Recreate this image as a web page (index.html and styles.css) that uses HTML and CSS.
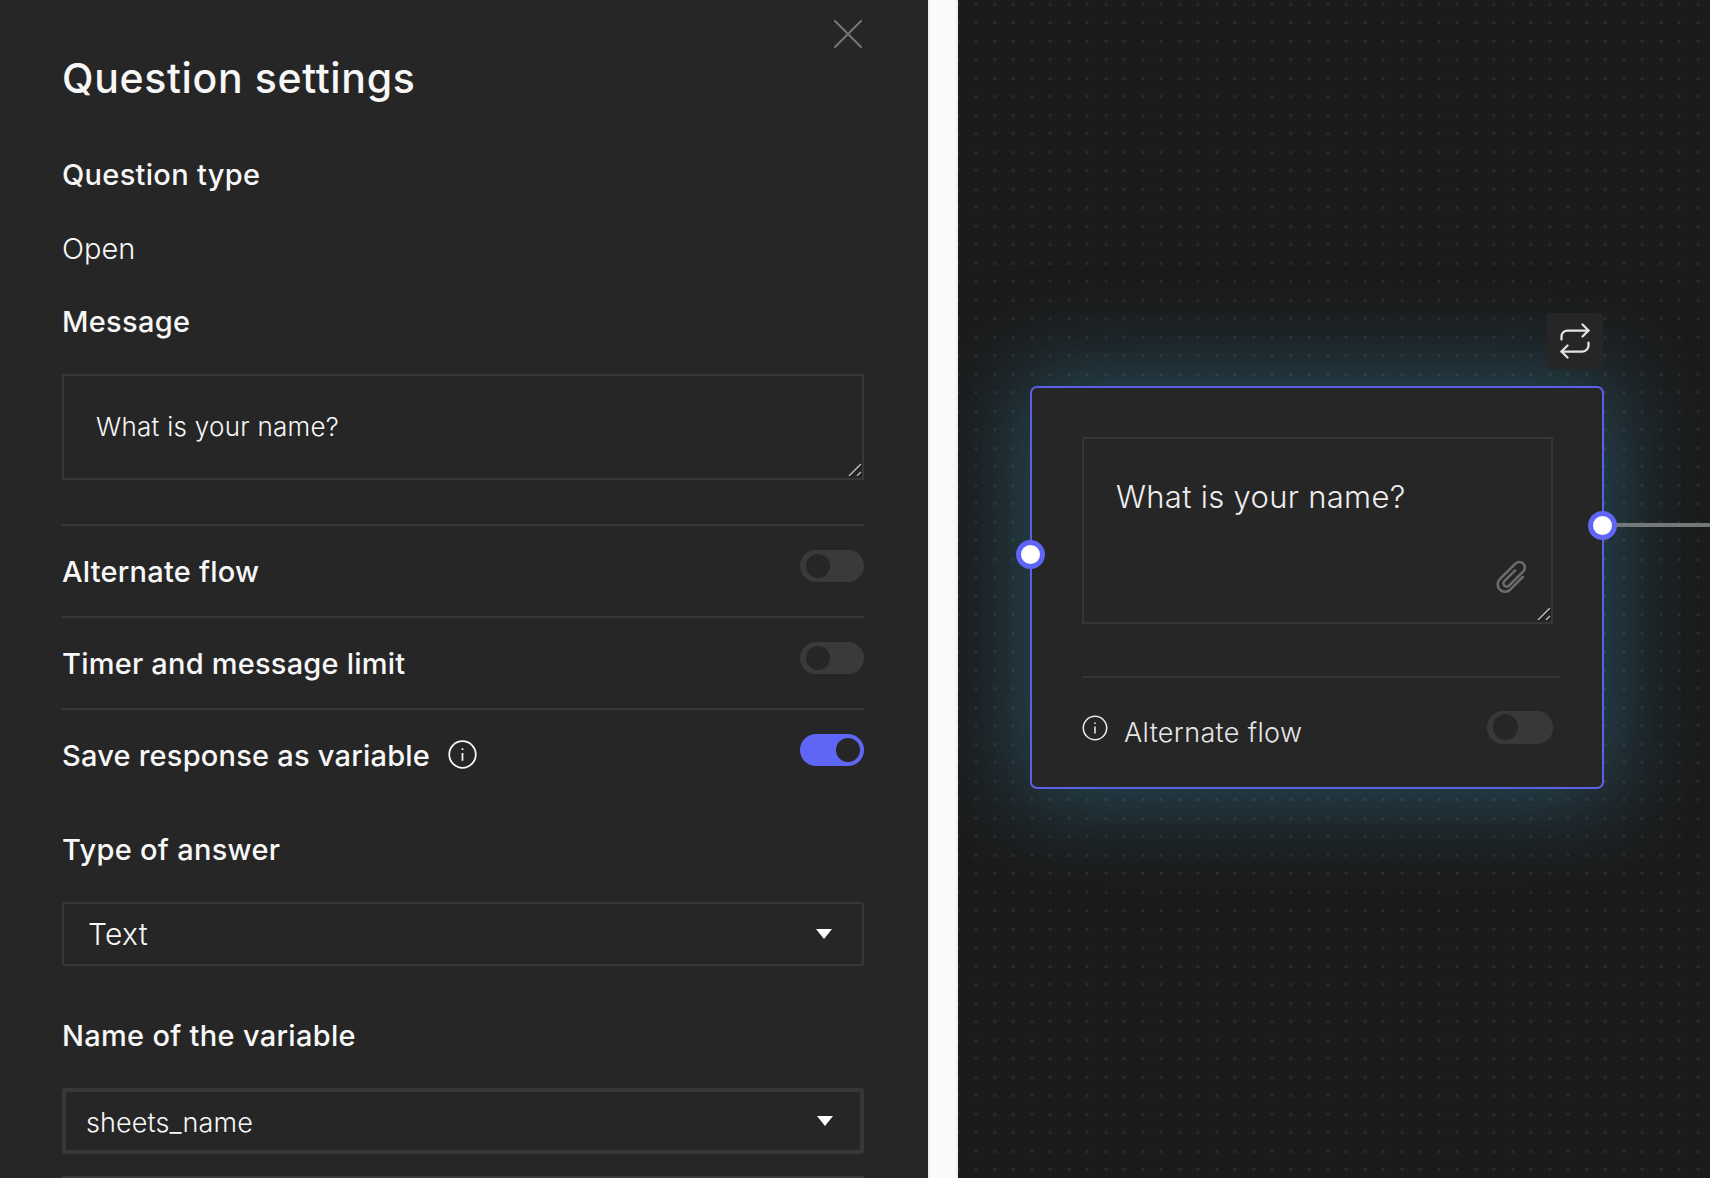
FILE: index.html
```html
<!DOCTYPE html>
<html lang="en">
<head>
<meta charset="utf-8">
<title>Question settings</title>
<link rel="stylesheet" href="styles.css">
</head>
<body>
<div class="app">
  <aside class="settings">
    <button class="close" aria-label="Close">
      <svg viewBox="0 0 28 28" class="close-icon"><path d="M1 1 27 27M27 1 1 27"/></svg>
    </button>
    <h1 class="title">Question settings</h1>
    <h2 class="label label-type">Question type</h2>
    <p class="value">Open</p>
    <h2 class="label label-message">Message</h2>
    <div class="textbox">What is your name?
      <svg viewBox="0 0 14 14" class="grip"><path class="grip-back" d="M1 14 14 1M9 14l5-5"/><path class="grip-line" d="M1 13 13 1M9 13l4-4"/></svg>
    </div>

    <div class="row row-first">
      <span class="row-label">Alternate flow</span>
      <span class="toggle"><span class="knob"></span></span>
    </div>
    <div class="row">
      <span class="row-label">Timer and message limit</span>
      <span class="toggle"><span class="knob"></span></span>
    </div>
    <div class="row row-last">
      <span class="row-label row-label-icon">Save response as variable
        <svg viewBox="0 0 28 28" class="info-icon"><circle cx="14" cy="14" r="12.8"/><path d="M14 12.5V20M14 8v1.6"/></svg>
      </span>
      <span class="toggle toggle-on"><span class="knob"></span></span>
    </div>

    <h2 class="label label-answer">Type of answer</h2>
    <div class="select select-text">
      <span>Text</span>
      <svg viewBox="0 0 16 10" class="caret"><path d="M0 0H16L8 10Z"/></svg>
    </div>
    <h2 class="label label-variable">Name of the variable</h2>
    <div class="select select-variable">
      <span>sheets_name</span>
      <svg viewBox="0 0 16 10" class="caret"><path d="M0 0H16L8 10Z"/></svg>
    </div>
    <div class="end-rule"></div>
  </aside>

  <div class="gutter"></div>

  <main class="canvas">
    <div class="glow"></div>
    <div class="dots"></div>
    <button class="repeat" aria-label="Repeat">
      <svg viewBox="0 0 24 24" class="repeat-icon"><path d="M17 1l4 4-4 4"/><path d="M3 11V9a4 4 0 0 1 4-4h14"/><path d="M7 23l-4-4 4-4"/><path d="M21 13v2a4 4 0 0 1-4 4H3"/></svg>
    </button>
    <div class="wire"></div>
    <section class="card">
      <div class="card-text">What is your name?
        <svg viewBox="0 0 30 30" class="clip-icon"><g transform="rotate(45 15 15)"><path d="M13 9.5V21.5a2.6 2.6 0 0 0 5.2 0V5.6a4.4 4.4 0 0 0-8.8 0V23a5.8 5.8 0 0 0 11.6 0V9"/></g></svg>
        <svg viewBox="0 0 14 14" class="grip"><path class="grip-back" d="M1 14 14 1M9 14l5-5"/><path class="grip-line" d="M1 13 13 1M9 13l4-4"/></svg>
      </div>
      <div class="card-rule"></div>
      <div class="card-foot">
        <svg viewBox="0 0 28 28" class="card-info"><circle cx="14" cy="14" r="12.6"/><path d="M14 12.5V20M14 8v1.6"/></svg>
        <span class="card-label">Alternate flow</span>
        <span class="toggle toggle-card"><span class="knob"></span></span>
      </div>
    </section>
    <span class="port port-in"></span>
    <span class="port port-out"></span>
  </main>
</div>
</body>
</html>
```
FILE: styles.css
```css
* { box-sizing: border-box; }
html, body { margin: 0; height: 100%; background: #fafafa; }
body { font-family: Inter, "Liberation Sans", sans-serif; color: #f7f7f7; overflow: hidden; }
.app { display: flex; width: 1710px; height: 1178px; overflow: hidden; }

.settings { position: relative; flex: 0 0 928px; height: 1178px; padding: 54px 64px 0 62px; background: #262626; }
.close { position: absolute; left: 833px; top: 19px; width: 30px; height: 30px; padding: 1px; border: 0; background: none; }
.close-icon { display: block; width: 28px; height: 28px; fill: none; stroke: #767676; stroke-width: 2; stroke-linecap: round; }

.title { margin: 0; font-size: 41px; line-height: 48px; font-weight: 500; letter-spacing: .65px; }
.label { margin: 0; font-size: 29px; line-height: 36px; font-weight: 500; letter-spacing: .3px; }
.label-type { margin-top: 55px; }
.label-message { margin-top: 37px; }
.label-answer { margin-top: 58px; }
.label-variable { margin-top: 52px; }
.value { margin: 38px 0 0; font-size: 29px; line-height: 36px; font-weight: 300; }

.textbox { position: relative; margin-top: 34px; height: 106px; padding: 35px 32px 0; border: 2px solid #383838; font-size: 26px; line-height: 32px; font-weight: 300; letter-spacing: .27px; }
.grip { position: absolute; right: 0; bottom: 1px; width: 14px; height: 14px; fill: none; }
.grip-back { stroke: #111111; stroke-width: 2; }
.grip-line { stroke: #b5b5b5; stroke-width: 1.6; }

.row { display: flex; justify-content: space-between; align-items: flex-start; height: 92px; padding-top: 24px; border-top: 2px solid #383838; }
.row-first { margin-top: 44px; }
.row-last { height: 66px; }
.row-label { margin-top: 4px; font-size: 29px; line-height: 36px; font-weight: 500; letter-spacing: .22px; }
.row-label-icon { display: flex; align-items: center; gap: 18px; }
.info-icon { width: 29px; height: 29px; margin-top: -4px; fill: none; stroke: #f7f7f7; stroke-width: 1.7; }

.toggle { display: block; flex: none; width: 64px; height: 32px; padding: 4px 0 0 6px; border-radius: 16px; background: #3a3a3a; }
.knob { display: block; width: 24px; height: 24px; border-radius: 50%; background: #262626; }
.toggle-on { padding-left: 36px; background: #5f66f6; }

.select { display: flex; align-items: center; justify-content: space-between; margin-top: 34px; border: 2px solid #383838; border-radius: 3px; font-weight: 300; }
.select-text { height: 64px; padding: 0 30px 0 24px; font-size: 30px; letter-spacing: .3px; }
.select-variable { height: 66px; padding: 0 27px 0 20px; border-width: 4px; font-size: 27px; letter-spacing: .1px; }
.select-variable span { padding-top: 3px; }
.caret { width: 16px; height: 10px; fill: #fff; }
.end-rule { height: 2px; margin-top: 22px; background: #383838; }

.gutter { flex: 0 0 30px; height: 1178px; background: #fafafa; border-left: 2px solid #eeeeee; border-right: 2px solid #eeeeee; }

.canvas { position: relative; flex: 1; height: 1178px; overflow: hidden; background: #1b1b1b; }
.glow { position: absolute; left: 72px; top: 386px; width: 574px; height: 403px; border-radius: 8px; box-shadow: 0 0 90px 14px rgba(45, 102, 126, .62); }
.dots { position: absolute; inset: 0; background-image: repeating-linear-gradient(90deg, rgba(255, 255, 255, .065) 0 3px, transparent 3px 18.5px); background-position: -1.5px 0; background-size: 740px 100%; -webkit-mask-image: repeating-linear-gradient(180deg, #000 0 3px, transparent 3px 18.5px); mask-image: repeating-linear-gradient(180deg, #000 0 3px, transparent 3px 18.5px); mask-size: 100% 1184px; mask-position: 0 3px; -webkit-mask-size: 100% 1184px; -webkit-mask-position: 0 3px; }

.repeat { position: absolute; left: 589px; top: 313px; display: flex; align-items: center; justify-content: center; width: 56px; height: 56px; padding: 0; border: 0; border-radius: 4px; background: #262626; }
.repeat-icon { width: 36px; height: 36px; fill: none; stroke: #e4e4e4; stroke-width: 1.5; stroke-linecap: round; stroke-linejoin: round; }

.wire { position: absolute; left: 658px; top: 523px; width: 100px; height: 4px; background: #747878; }

.card { position: absolute; left: 72px; top: 386px; width: 574px; height: 403px; padding: 49px 0 0 50px; border: 2px solid #5a61e4; border-radius: 7px; background: #262626; }
.card-text { position: relative; width: 471px; height: 187px; padding: 40px 32px 0; border: 2px solid #353535; font-size: 31px; line-height: 36px; font-weight: 300; letter-spacing: .3px; color: #ededed; }
.clip-icon { position: absolute; right: 20px; top: 119px; width: 38px; height: 38px; fill: none; stroke: #6c6c6c; stroke-width: 2; stroke-linecap: round; }
.card-rule { width: 479px; height: 2px; margin-top: 52px; background: #353535; }
.card-foot { position: relative; display: flex; align-items: center; width: 471px; margin-top: 36px; height: 36px; }
.card-info { flex: none; width: 26px; height: 26px; margin-top: -8px; fill: none; stroke: #e6e6e6; stroke-width: 1.7; }
.card-label { margin-left: 16px; padding-top: 2px; font-size: 27px; line-height: 36px; font-weight: 300; letter-spacing: .35px; color: #e6e6e6; }
.toggle-card { position: absolute; right: 0; top: -3px; width: 66px; height: 33px; padding: 3px 0 0 6px; background: #383838; }
.toggle-card .knob { width: 25px; height: 26px; background: #262626; }

.port { position: absolute; width: 29px; height: 29px; border: 5px solid #5f66f6; border-radius: 50%; background: #fff; }
.port-in { left: 58px; top: 540px; }
.port-out { left: 630px; top: 511px; }
```
